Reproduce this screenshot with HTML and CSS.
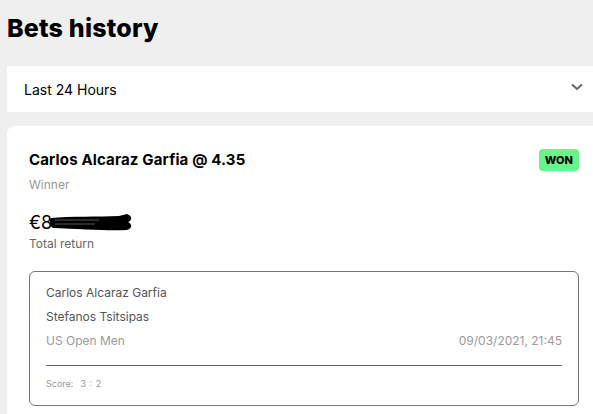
FILE: index.html
```html
<!DOCTYPE html>
<html lang="en">
  <head>
    <meta charset="UTF-8" />
    <meta name="viewport" content="width=device-width, initial-scale=1.0" />
    <title>Bets history</title>
    <link rel="stylesheet" href="styles.css">
  </head>
  <body>
    <h1 class="title">Bets history</h1>
    <div class="select">
      <span>Last 24 Hours</span>
      <svg class="chevron" width="12" height="8" viewBox="0 0 12 8">
        <path d="M1 1.5 L6 6 L11 1.5" fill="none" stroke="#666" stroke-width="2" />
      </svg>
    </div>
    <div class="card">
      <div class="card-head">
        <div class="pick">Carlos Alcaraz Garfia @ 4.35</div>
        <span class="badge">WON</span>
      </div>
      <div class="market">Winner</div>
      <div class="amount">
        €8<svg class="scribble" width="84" height="20" viewBox="0 0 84 20">
          <path d="M2 6 C20 4 50 5 70 4 L78 2 C84 4 83 9 79 10 C83 12 84 16 78 18 C60 19 30 17 4 16 C0 14 0 8 2 6 Z" fill="#000" />
          <path d="M6 8 H50 M6 12 H46" stroke="#555" stroke-width="1" />
        </svg>
      </div>
      <div class="label">Total return</div>
      <div class="event">
        <div class="player">Carlos Alcaraz Garfia</div>
        <div class="player">Stefanos Tsitsipas</div>
        <div class="event-row">
          <span>US Open Men</span>
          <span>09/03/2021, 21:45</span>
        </div>
        <div class="score">Score:&nbsp; 3 : 2</div>
      </div>
    </div>
  </body>
</html>
```

FILE: styles.css
```css
body {
  margin: 0;
  padding: 0 0 0 7px;
  background-color: #efefef;
  font-family: Inter, "Open Sans", sans-serif;
  color: #000;
  overflow: hidden;
}
.title {
  margin: 0;
  padding: 13px 0 0 0;
  height: 53px;
  box-sizing: border-box;
  font-size: 25px;
  font-weight: 800;
  letter-spacing: 0.2px;
}
.select {
  height: 46px;
  margin-right: -10px;
  background-color: #fff;
  display: flex;
  align-items: center;
  justify-content: space-between;
  padding: 0 20px 0 17px;
  font-size: 14px;
  margin-top: 13px;
}
.chevron {
  margin-top: -4px;
}
.card {
  margin-top: 14px;
  margin-right: -20px;
  background-color: #fff;
  border-radius: 8px 0 0 0;
  padding: 21px 34px 12px 22px;
}
.card-head {
  display: flex;
  justify-content: space-between;
  align-items: center;
}
.pick {
  font-size: 15px;
  font-weight: 700;
  letter-spacing: 0.15px;
}
.badge {
  background-color: #66f58a;
  border-radius: 4px;
  font-size: 11px;
  font-weight: 800;
  padding: 4px 6px;
  margin-top: 2px;
}
.market {
  margin-top: 6px;
  font-size: 12px;
  color: #999;
}
.amount {
  margin-top: 19px;
  font-size: 18px;
  display: flex;
  align-items: center;
  height: 22px;
}
.scribble {
  margin-left: -3px;
}
.label {
  margin-top: 3px;
  font-size: 12px;
  color: #666;
}
.event {
  margin-top: 20px;
  border: 1px solid #777;
  border-radius: 6px;
  padding: 13px 16px 16px 16px;
  font-size: 12px;
}
.player {
  color: #555;
  margin-bottom: 9px;
}
.event-row {
  display: flex;
  justify-content: space-between;
  color: #999;
  padding-bottom: 17px;
  border-bottom: 1px solid #666;
}
.score {
  margin-top: 12px;
  font-size: 9px;
  color: #999;
  word-spacing: 1px;
}
```
